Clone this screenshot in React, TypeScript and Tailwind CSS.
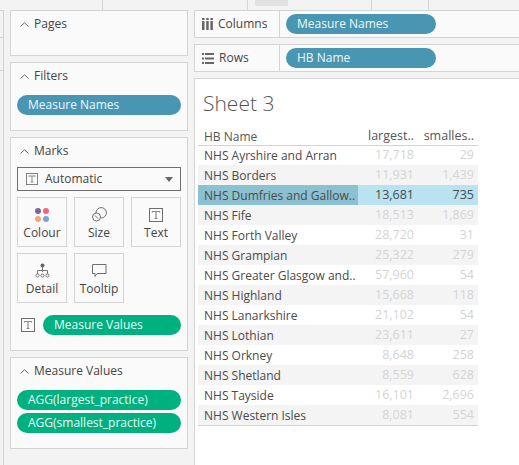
const rows = [
  ["NHS Ayrshire and Arran", "17,718", "29"],
  ["NHS Borders", "11,931", "1,439"],
  ["NHS Dumfries and Gallow..", "13,681", "735"],
  ["NHS Fife", "18,513", "1,869"],
  ["NHS Forth Valley", "28,720", "31"],
  ["NHS Grampian", "25,322", "279"],
  ["NHS Greater Glasgow and..", "57,960", "54"],
  ["NHS Highland", "15,668", "118"],
  ["NHS Lanarkshire", "21,102", "54"],
  ["NHS Lothian", "23,611", "27"],
  ["NHS Orkney", "8,648", "258"],
  ["NHS Shetland", "8,559", "628"],
  ["NHS Tayside", "16,101", "2,696"],
  ["NHS Western Isles", "8,081", "554"],
];

function Chevron() {
  return (
    <svg width="9" height="5" viewBox="0 0 9 5" fill="none" stroke="#666" className="shrink-0">
      <path d="M0.5 4.5 L4.5 0.8 L8.5 4.5" />
    </svg>
  );
}

function Card({ title, className, children }: { title: string; className: string; children?: React.ReactNode }) {
  return (
    <div className={`border border-[#d4d4d4] bg-[#fafafa] ${className}`}>
      <div className="flex items-center gap-[5px] pl-[9px] h-[26px] text-[12px] text-[#444]">
        <Chevron />
        <span>{title}</span>
      </div>
      {children}
    </div>
  );
}

function Pill({ label, color, className }: { label: string; color: string; className: string }) {
  return (
    <div className={`h-[20px] rounded-full flex items-center text-[12px] text-[#eef8f8] ${color} ${className}`}>
      {label}
    </div>
  );
}

function TextIcon({ size = 14 }: { size?: number }) {
  return (
    <svg width={size} height={size} viewBox="0 0 14 14" fill="none" className="shrink-0">
      <rect x="0.5" y="0.5" width="13" height="13" stroke="#6e6e6e" />
      <path d="M3.5 4.5 V3.5 H10.5 V4.5 M7 3.5 V10.5 M5.5 10.5 H8.5" stroke="#8a8a8a" strokeWidth="1.2" />
    </svg>
  );
}

function MarkButton({ label, icon }: { label: string; icon: React.ReactNode }) {
  return (
    <div className="w-[50px] h-[50px] border border-[#d4d4d4] flex flex-col items-center pt-[9px] text-[12px] text-[#444]">
      <div className="h-[15px] flex items-center justify-center">{icon}</div>
      <div className="mt-[3px] leading-[16px]">{label}</div>
    </div>
  );
}

function Shelf({ label, icon, pill }: { label: string; icon: React.ReactNode; pill: string }) {
  return (
    <div className="h-[28px] border border-r-0 border-[#d4d4d4] bg-[#fafafa] flex items-center">
      <div className="w-[85px] h-full flex items-center border-r border-[#d4d4d4] pl-[7px] gap-[5px] text-[12px] text-[#444]">
        {icon}
        <span>{label}</span>
      </div>
      <Pill label={pill} color="bg-[#4996b2]" className="w-[150px] ml-[6px] pl-[11px]" />
    </div>
  );
}

export default function App() {
  return (
    <div
      className="w-[519px] h-[465px] overflow-hidden bg-[#f3f3f3] flex flex-col"
      style={{ fontFamily: "'Open Sans', Lato, sans-serif" }}
    >
      {/* tab strip */}
      <div className="h-[10px] shrink-0 flex">
        <div className="w-[103px] border-r border-[#d4d4d4]" />
        <div className="w-[145px] border-r border-[#d4d4d4]" />
        <div className="w-[124px] border-r border-[#d4d4d4] pl-[7px]">
          <div className="w-[33px] h-[6px] bg-[#e2e2e2]" />
        </div>
        <div className="w-[57px] border-r border-[#d4d4d4]" />
      </div>

      <div className="flex flex-1 min-h-0">
        {/* left rail */}
        <div className="w-[4px] border-r border-t border-[#d4d4d4]">
          <div className="h-[27px] border-b border-[#d4d4d4]" />
          <div className="h-[33px] border-b border-[#d4d4d4]" />
        </div>

        {/* side panel */}
        <div className="w-[190px] pl-[6px] flex flex-col gap-[6px]">
          <Card title="Pages" className="w-[178px] h-[46px]" />
          <Card title="Filters" className="w-[178px] h-[69px]">
            <Pill label="Measure Names" color="bg-[#4996b2]" className="mx-[6px] mt-[6px] pl-[11px]" />
          </Card>
          <Card title="Marks" className="w-[178px] h-[214px]">
            <div className="mx-[6px] mt-[3px] h-[24px] border border-[#6e6e6e] flex items-center pl-[8px] pr-[7px] text-[12px] text-[#444]">
              <TextIcon size={12} />
              <span className="ml-[7px] flex-1">Automatic</span>
              <svg width="8" height="5" viewBox="0 0 8 5" fill="#666">
                <path d="M0 0 H8 L4 5 Z" />
              </svg>
            </div>
            <div className="mx-[6px] mt-[6px] flex flex-wrap gap-x-[7px] gap-y-[6px]">
              <MarkButton
                label="Colour"
                icon={
                  <div className="grid grid-cols-2 gap-[2px]">
                    <div className="w-[6px] h-[6px] rounded-full bg-[#7b6792]" />
                    <div className="w-[6px] h-[6px] rounded-full bg-[#f2647c]" />
                    <div className="w-[6px] h-[6px] rounded-full bg-[#f4a77a]" />
                    <div className="w-[6px] h-[6px] rounded-full bg-[#7ba6d4]" />
                  </div>
                }
              />
              <MarkButton
                label="Size"
                icon={
                  <svg width="15" height="15" viewBox="0 0 15 15" fill="none" stroke="#6e6e6e">
                    <path d="M4 6 A5.2 5.2 0 1 1 9.2 11" />
                    <circle cx="4.5" cy="10" r="4" />
                    <path d="M3 8.5 L6 11.5" />
                  </svg>
                }
              />
              <MarkButton label="Text" icon={<TextIcon />} />
              <MarkButton
                label="Detail"
                icon={
                  <svg width="15" height="15" viewBox="0 0 15 15" fill="none" stroke="#777">
                    <circle cx="7.5" cy="2.5" r="2" fill="#666" stroke="none" />
                    <path d="M7.5 4 V9 M2.5 11 V7.5 H12.5 V11" />
                    <circle cx="2.5" cy="12.5" r="1.6" />
                    <circle cx="7.5" cy="12.5" r="1.6" />
                    <circle cx="12.5" cy="12.5" r="1.6" />
                  </svg>
                }
              />
              <MarkButton
                label="Tooltip"
                icon={
                  <svg width="15" height="14" viewBox="0 0 15 14" fill="none" stroke="#6e6e6e">
                    <path d="M0.5 0.5 H14 V9.5 H5 L3 12.5 V9.5 H0.5 Z" />
                  </svg>
                }
              />
            </div>
            <div className="mx-[6px] mt-[12px] flex items-center">
              <div className="w-[26px] pl-[4px]">
                <TextIcon />
              </div>
              <Pill label="Measure Values" color="bg-[#00b180]" className="flex-1 pl-[11px]" />
            </div>
          </Card>
          <Card title="Measure Values" className="w-[178px] h-[92px]">
            <div className="mx-[6px] mt-[6px] flex flex-col gap-[3px]">
              <Pill label="AGG(largest_practice)" color="bg-[#00b180]" className="pl-[11px]" />
              <Pill label="AGG(smallest_practice)" color="bg-[#00b180]" className="pl-[11px]" />
            </div>
          </Card>
        </div>

        {/* main */}
        <div className="flex-1 min-w-0 flex flex-col gap-[6px]">
          <Shelf
            label="Columns"
            pill="Measure Names"
            icon={
              <svg width="11" height="12" viewBox="0 0 11 12" fill="#666">
                <rect x="0" y="0" width="2.5" height="2" />
                <rect x="0" y="3" width="2.5" height="9" />
                <rect x="4.2" y="0" width="2.5" height="2" />
                <rect x="4.2" y="3" width="2.5" height="9" />
                <rect x="8.4" y="0" width="2.5" height="2" />
                <rect x="8.4" y="3" width="2.5" height="9" />
              </svg>
            }
          />
          <Shelf
            label="Rows"
            pill="HB Name"
            icon={
              <svg width="12" height="11" viewBox="0 0 12 11" fill="#666">
                <rect x="0" y="0" width="2" height="2" />
                <rect x="3" y="0" width="9" height="2" />
                <rect x="0" y="4.5" width="2" height="2" />
                <rect x="3" y="4.5" width="9" height="2" />
                <rect x="0" y="9" width="2" height="2" />
                <rect x="3" y="9" width="9" height="2" />
              </svg>
            }
          />
          <div className="flex-1 border-l border-t border-[#d4d4d4] bg-white pl-[3px]">
            <div className="pl-[5px] pt-[10px] h-[49px] text-[21px] font-light leading-[28px] text-[#555]">Sheet 3</div>
            <div className="w-[280px]">
              <div className="h-[18px] flex items-center border-b border-[#d4d4d4] text-[12px] text-[#555]">
                <div className="w-[160px] pl-[6px]">HB Name</div>
                <div className="w-[60px] text-right pr-[4px] text-[12.5px]">largest..</div>
                <div className="w-[60px] text-right pr-[4px] text-[12.5px]">smalles..</div>
              </div>
              {rows.map((r, i) => {
                const active = i === 2;
                const stripe = i % 2 === 1 ? "bg-[#f4f4f4]" : "bg-white";
                const nudge = i === 0 ? "" : "pt-[1px]";
                return (
                  <div
                    key={r[0]}
                    className={`flex items-center text-[12px] ${i === 0 ? "h-[19px]" : "h-[20px]"} ${active ? "bg-[#b9e3f0]" : stripe}`}
                  >
                    <div className={`w-[160px] h-full flex items-center pl-[6px] text-[#4a4a4a] whitespace-nowrap ${nudge} ${active ? "bg-[#8cc1d1]" : ""}`}>
                      {r[0]}
                    </div>
                    <div className={`w-[60px] text-right pr-[4px] text-[12.5px] ${nudge} ${active ? "text-[#4a4a4a]" : "text-[#d4d4d4]"}`}>{r[1]}</div>
                    <div className={`w-[60px] text-right pr-[4px] text-[12.5px] ${nudge} ${active ? "text-[#4a4a4a]" : "text-[#d4d4d4]"}`}>{r[2]}</div>
                  </div>
                );
              })}
              <div className="border-t border-[#d4d4d4]" />
            </div>
          </div>
        </div>
      </div>
    </div>
  );
}
